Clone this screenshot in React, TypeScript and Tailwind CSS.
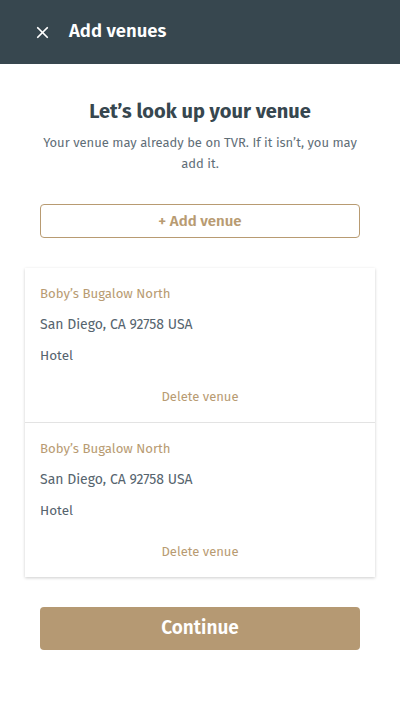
import { X } from "lucide-react";

const venues = [
  { id: 1, name: "Boby’s Bugalow North", address: "San Diego, CA 92758 USA", kind: "Hotel" },
  { id: 2, name: "Boby’s Bugalow North", address: "San Diego, CA 92758 USA", kind: "Hotel" },
];

export default function App() {
  return (
    <div
      className="min-h-[711px] w-[400px] bg-white"
      style={{ fontFamily: '"Fira Sans", "Open Sans", "Noto Sans", sans-serif' }}>
      <header className="flex h-16 items-center bg-[#37474f] pl-[33px] text-white">
        <X className="h-[19px] w-[19px]" strokeWidth={2.2} />
        <h1 className="ml-[17px] text-[18.5px] font-semibold">Add venues</h1>
      </header>

      <div className="px-10 pt-[33px]">
        <h2 className="text-center text-[20px] font-bold leading-[28px] text-[#37474f]">
          Let’s look up your venue
        </h2>
        <p className="mt-[7px] text-center text-[13px] leading-[21px] text-[#5f6e78]">
          Your venue may already be on TVR. If it isn’t, you may add it.
        </p>

        <button
          type="button"
          className="mt-[30px] h-[34px] w-full rounded-[4px] border border-[#b89b72] text-[15px] font-semibold text-[#b89b72]">
          + Add venue
        </button>
      </div>

      <ul className="mx-[25px] mt-[30px] divide-y divide-[#e3e3e3] bg-white shadow-[0_1px_3px_rgba(0,0,0,0.2)]">
        {venues.map((venue) => (
          <li key={venue.id} className="px-[15px] pt-[16px] pb-[15px]">
            <p className="text-[13.2px] leading-[20px] text-[#b89b72]">{venue.name}</p>
            <p className="mt-[11px] text-[14px] leading-[20px] text-[#56646e]">{venue.address}</p>
            <p className="mt-[11px] text-[13.5px] leading-[20px] text-[#56646e]">{venue.kind}</p>
            <button
              type="button"
              className="mt-[21px] block w-full text-center text-[13px] leading-[20px] text-[#b89b72]">
              Delete venue
            </button>
          </li>
        ))}
      </ul>

      <div className="px-10 pt-[30px]">
        <button
          type="button"
          className="h-[43px] w-full rounded-[4px] bg-[#b59973] text-[19px] font-semibold text-white">
          Continue
        </button>
      </div>
    </div>
  );
}
